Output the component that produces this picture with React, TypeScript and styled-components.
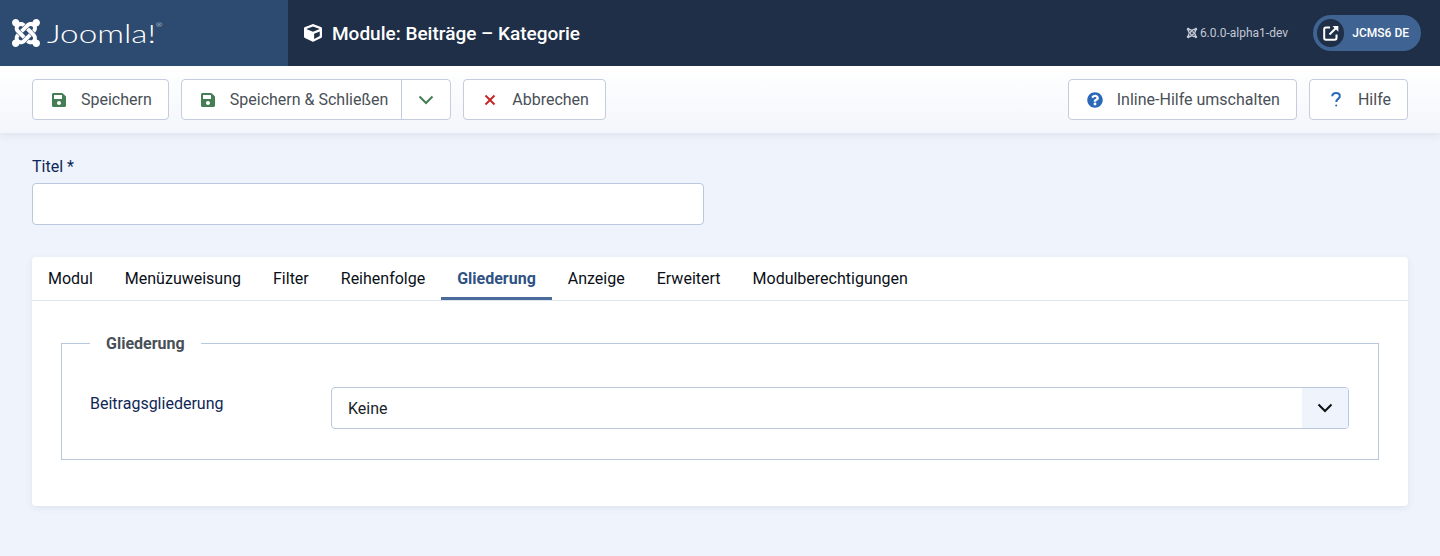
import React from "react";
import styled, { createGlobalStyle } from "styled-components";
import { FaJoomla, FaCube, FaSave, FaQuestionCircle } from "react-icons/fa";

const GlobalStyle = createGlobalStyle`
  html, body {
    margin: 0;
    padding: 0;
    background: #eff3fb;
    font-family: Roboto, "Liberation Sans", sans-serif;
    font-size: 16px;
    color: #495057;
  }
  * {
    box-sizing: border-box;
  }
`;

const Page = styled.div`
  width: 1440px;
  height: 556px;
  overflow: hidden;
`;

const Header = styled.header`
  display: flex;
  align-items: stretch;
  height: 66px;
  background: #1f2f47;
  color: #fff;
`;

const Brand = styled.div`
  display: flex;
  align-items: center;
  width: 288px;
  padding-left: 10px;
  gap: 5px;
  background: #2d4a70;
`;

const BrandName = styled.span`
  position: relative;
  display: inline-block;
  font-family: Lato, sans-serif;
  font-weight: 300;
  font-size: 25px;
  line-height: 1;
  transform: scaleX(1.33);
  transform-origin: left center;
  & > sup {
    position: absolute;
    top: 1px;
    right: -5px;
    font-size: 6px;
    line-height: 1;
  }
`;

const PageTitle = styled.h1`
  display: flex;
  align-items: center;
  gap: 10px;
  margin: 0;
  padding-left: 16px;
  flex: 1;
  font-size: 19px;
  font-weight: 500;
`;

const Version = styled.div`
  display: flex;
  align-items: center;
  gap: 2px;
  margin-right: 25px;
  font-size: 12px;
  color: #c3cad6;
`;

const SiteWrap = styled.div`
  display: flex;
  align-items: center;
  padding-right: 19px;
`;

const SitePill = styled.div`
  display: flex;
  align-items: center;
  width: 108px;
  height: 36px;
  padding: 0 12px 0 4px;
  gap: 8px;
  border-radius: 18px;
  background: #3f6392;
  font-size: 12px;
  font-weight: 500;
  white-space: nowrap;
`;

const SiteIcon = styled.span`
  display: flex;
  align-items: center;
  justify-content: center;
  width: 28px;
  height: 28px;
  border-radius: 50%;
  background: #1f2f47;
`;

const Toolbar = styled.div`
  display: flex;
  justify-content: space-between;
  height: 67px;
  padding: 13px 32px 0;
  background: linear-gradient(#fff, #f3f6fb);
  box-shadow: 0 2px 8px rgba(80, 100, 140, 0.12);
`;

const ButtonGroup = styled.div`
  display: flex;
  gap: 12px;
`;

const Button = styled.div`
  display: flex;
  align-items: center;
  height: 41px;
  border: 1px solid #c3cddd;
  border-radius: 4px;
  background: #fff;
  color: #495057;
  font-size: 16px;
  white-space: nowrap;
`;

const ButtonBody = styled.span<{ $split?: boolean }>`
  display: flex;
  align-items: center;
  height: 100%;
  padding: 0 ${(p) => (p.$split ? 13 : 16)}px 0 18px;
`;

const IconSlot = styled.span<{ $color: string }>`
  display: flex;
  justify-content: center;
  width: 16px;
  margin-right: 14px;
  color: ${(p) => p.$color};
`;

const Caret = styled.span`
  display: flex;
  align-items: center;
  justify-content: center;
  width: 49px;
  height: 100%;
  border-left: 1px solid #c3cddd;
  color: #457d54;
`;

const Main = styled.main`
  padding: 24px 32px 0;
`;

const Label = styled.label`
  display: block;
  margin-bottom: 7px;
  line-height: 19px;
  color: #0f2757;
`;

const TitleInput = styled.input`
  display: block;
  width: 672px;
  height: 42px;
  border: 1px solid #b9c8dd;
  border-radius: 4px;
  background: #fff;
  outline: none;
`;

const Card = styled.section`
  height: 249px;
  margin-top: 32px;
  border-radius: 4px;
  background: #fff;
  box-shadow: 0 2px 6px rgba(80, 100, 140, 0.1);
`;

const Tabs = styled.div`
  display: flex;
  height: 44px;
  border-bottom: 1px solid #dfe5ef;
`;

const Tab = styled.div<{ $active?: boolean }>`
  height: 43px;
  padding: 0 16px;
  line-height: 43px;
  font-size: 16px;
  color: ${(p) => (p.$active ? "#2f5283" : "#0a0f18")};
  font-weight: ${(p) => (p.$active ? 700 : 400)};
  border-bottom: ${(p) => (p.$active ? "3px solid #4b6c9a" : "none")};
`;

const Fieldset = styled.fieldset`
  margin: 33px 29px 0;
  padding: 34px 29px 0 28px;
  height: 126px;
  border: 1px solid #b9c8dd;
`;

const Legend = styled.legend`
  padding: 0 16px;
  font-size: 16px;
  font-weight: 700;
  line-height: 19px;
  color: #495057;
`;

const Row = styled.div`
  display: flex;
  align-items: flex-start;
`;

const RowLabel = styled.label`
  width: 241px;
  padding-top: 7px;
  line-height: 19px;
  color: #0f2757;
`;

const Select = styled.div`
  display: flex;
  align-items: center;
  justify-content: space-between;
  flex: 1;
  height: 42px;
  padding-left: 16px;
  border: 1px solid #b9c8dd;
  border-radius: 4px;
  color: #1a1f28;
  overflow: hidden;
`;

const SelectArrow = styled.span`
  display: flex;
  align-items: center;
  justify-content: center;
  width: 46px;
  height: 100%;
  background: #eff3fb;
  color: #111;
`;

const Chevron = () => (
  <svg width="16" height="10" viewBox="0 0 16 10" fill="none" stroke="currentColor" strokeWidth="2">
    <path d="M1.5 1.5 8 8l6.5-6.5" />
  </svg>
);

const CloseIcon = () => (
  <svg width="12" height="12" viewBox="0 0 12 12" fill="none" stroke="currentColor" strokeWidth="2">
    <path d="M1.5 1.5l9 9M10.5 1.5l-9 9" />
  </svg>
);

const HelpGlyph = () => (
  <svg width="10" height="15" viewBox="0 0 10 15" fill="none" stroke="currentColor" strokeWidth="2">
    <path d="M1.2 4.2C1.2 2.2 2.9 1 5 1s3.8 1.2 3.8 3.2c0 2.6-3.6 2.8-3.6 5.8" />
    <circle cx="5.2" cy="13.4" r="1" fill="currentColor" stroke="none" />
  </svg>
);

const LinkOutIcon = () => (
  <svg width="16" height="16" viewBox="0 0 16 16" fill="none" stroke="currentColor" strokeWidth="2">
    <path d="M7 2.5H3a1.8 1.8 0 0 0-1.8 1.8V13A1.8 1.8 0 0 0 3 14.8h8.7a1.8 1.8 0 0 0 1.8-1.8V9.5" />
    <path d="M6.5 9.5 13.5 2.5" />
    <path d="M9.5 1h5.8v5.8z" fill="currentColor" stroke="none" />
  </svg>
);

const tabs = ["Modul", "Menüzuweisung", "Filter", "Reihenfolge", "Gliederung", "Anzeige", "Erweitert", "Modulberechtigungen"];

export default function App() {
  return (
    <Page>
      <GlobalStyle />
      <Header>
        <Brand>
          <FaJoomla size={32} />
          <BrandName>
            Joomla!<sup>®</sup>
          </BrandName>
        </Brand>
        <PageTitle>
          <FaCube size={18} />
          Module: Beiträge – Kategorie
        </PageTitle>
        <Version>
          <FaJoomla size={12} />
          6.0.0-alpha1-dev
        </Version>
        <SiteWrap>
          <SitePill>
            <SiteIcon>
              <LinkOutIcon />
            </SiteIcon>
            JCMS6 DE
          </SitePill>
        </SiteWrap>
      </Header>
      <Toolbar>
        <ButtonGroup>
          <Button>
            <ButtonBody>
              <IconSlot $color="#457d54">
                <FaSave size={16} />
              </IconSlot>
              Speichern
            </ButtonBody>
          </Button>
          <Button>
            <ButtonBody $split>
              <IconSlot $color="#457d54">
                <FaSave size={16} />
              </IconSlot>
              Speichern &amp; Schließen
            </ButtonBody>
            <Caret>
              <Chevron />
            </Caret>
          </Button>
          <Button>
            <ButtonBody>
              <IconSlot $color="#c52827">
                <CloseIcon />
              </IconSlot>
              Abbrechen
            </ButtonBody>
          </Button>
        </ButtonGroup>
        <ButtonGroup>
          <Button>
            <ButtonBody>
              <IconSlot $color="#2a69b8">
                <FaQuestionCircle size={16} />
              </IconSlot>
              Inline-Hilfe umschalten
            </ButtonBody>
          </Button>
          <Button>
            <ButtonBody>
              <IconSlot $color="#2a69b8">
                <HelpGlyph />
              </IconSlot>
              Hilfe
            </ButtonBody>
          </Button>
        </ButtonGroup>
      </Toolbar>
      <Main>
        <Label>Titel *</Label>
        <TitleInput />
        <Card>
          <Tabs>
            {tabs.map((t) => (
              <Tab key={t} $active={t === "Gliederung"}>
                {t}
              </Tab>
            ))}
          </Tabs>
          <Fieldset>
            <Legend>Gliederung</Legend>
            <Row>
              <RowLabel>Beitragsgliederung</RowLabel>
              <Select>
                Keine
                <SelectArrow>
                  <Chevron />
                </SelectArrow>
              </Select>
            </Row>
          </Fieldset>
        </Card>
      </Main>
    </Page>
  );
}
